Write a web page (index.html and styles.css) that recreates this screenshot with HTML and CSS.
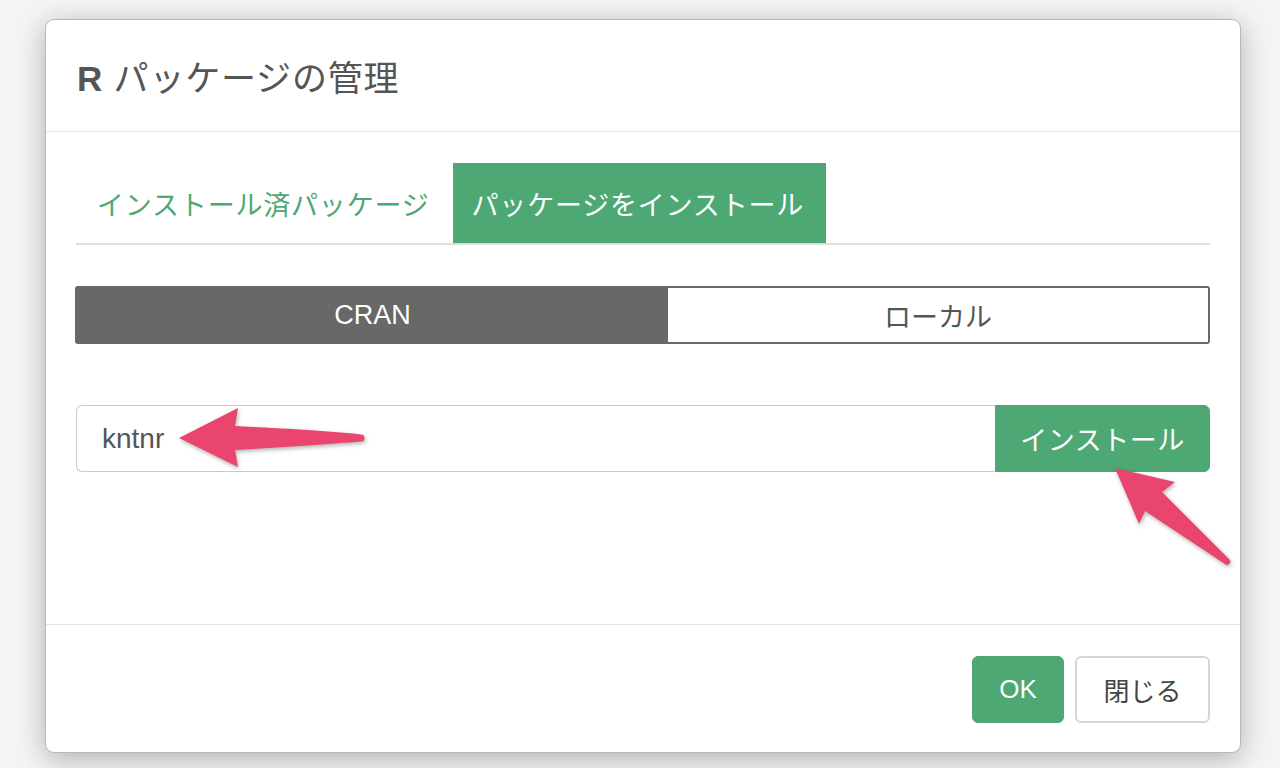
FILE: index.html
```html
<!DOCTYPE html>
<html lang="ja">
<head>
<meta charset="utf-8">
<title>R パッケージの管理</title>
<link rel="stylesheet" href="styles.css">
</head>
<body>
<div class="dialog">
  <div class="dialog-header">
    <h1 class="dialog-title"><span class="title-r">R</span> パッケージの管理</h1>
  </div>
  <div class="dialog-body">
    <ul class="tabs">
      <li class="tab">インストール済パッケージ</li>
      <li class="tab tab-active">パッケージをインストール</li>
    </ul>
    <div class="segmented">
      <div class="seg seg-active">CRAN</div>
      <div class="seg">ローカル</div>
    </div>
    <div class="install-row">
      <div class="pkg-input">kntnr</div>
      <button class="btn btn-green btn-install">インストール</button>
    </div>
  </div>
  <div class="dialog-footer">
    <button class="btn btn-green btn-ok">OK</button>
    <button class="btn btn-default btn-close">閉じる</button>
  </div>
</div>
<svg class="arrows" width="1280" height="768" viewBox="0 0 1280 768">
  <path d="M179 438 L238 408 L235 426 C290 429 330 431 361 434.5 A3.5 3.5 0 0 1 361 441.5 C330 444 290 447 235 450 L238 467 Z"/>
  <path d="M1115 468 L1175 482 L1162 492 L1229 559 A3 3 0 0 1 1225 564 L1145 511 L1139 524 Z"/>
</svg>
</body>
</html>
```

FILE: styles.css
```css
* { box-sizing: border-box; }

html, body {
  margin: 0;
  padding: 0;
  width: 1280px;
  height: 768px;
  overflow: hidden;
}

body {
  background: #f4f4f4;
  font-family: "Liberation Sans", "Noto Sans CJK JP", sans-serif;
  color: #555;
  position: relative;
  padding: 19px 0 0 45px;
}

.dialog {
  width: 1196px;
  height: 734px;
  background: #fff;
  border: 1px solid #b8b8b8;
  border-radius: 9px;
  box-shadow: 0 6px 28px rgba(0, 0, 0, 0.28);
  display: flex;
  flex-direction: column;
  overflow: hidden;
}

.dialog-header {
  height: 112px;
  flex: none;
  border-bottom: 1px solid #e5e5e5;
  padding: 0 31px;
  display: flex;
  align-items: center;
}

.dialog-title {
  margin: 0;
  font-size: 35px;
  font-weight: 400;
  color: #555;
  letter-spacing: 0.8px;
}

.title-r {
  font-weight: 700;
}

.dialog-body {
  flex: 1;
  padding: 31px 30px 0 30px;
}

.tabs {
  list-style: none;
  margin: 0;
  padding: 0;
  display: flex;
  gap: 2px;
  border-bottom: 2px solid #dedede;
}

.tab {
  height: 80px;
  padding: 0 21px;
  display: flex;
  align-items: center;
  font-size: 27px;
  color: #4da873;
  letter-spacing: 0.8px;
}

.tab-active {
  background: #4da873;
  color: #fff;
  padding: 0 22px 0 19px;
}

.segmented {
  margin-top: 41px;
  height: 58px;
  display: grid;
  grid-template-columns: 591px 1fr;
  border: 2px solid #686868;
  border-radius: 3px;
  margin-left: -1px;
}

.seg {
  display: flex;
  align-items: center;
  justify-content: center;
  font-size: 27px;
  color: #555;
  background: #fff;
}

.seg-active {
  background: #686868;
  color: #fff;
}

.install-row {
  margin-top: 61px;
  height: 67px;
  display: flex;
}

.pkg-input {
  flex: 1;
  border: 1px solid #cacaca;
  border-right: none;
  border-radius: 6px 0 0 6px;
  padding: 0 25px;
  display: flex;
  align-items: center;
  font-size: 28px;
  color: #555;
}

.btn {
  font-family: inherit;
  font-size: 27px;
  border-radius: 6px;
  cursor: pointer;
  padding: 0;
  height: 67px;
}

.btn-green {
  background: #4da873;
  border: 1px solid #4da873;
  color: #fff;
}

.btn-install {
  width: 215px;
  border-radius: 0 6px 6px 0;
  letter-spacing: 0.5px;
}

.dialog-footer {
  flex: none;
  border-top: 1px solid #e5e5e5;
  padding: 31px 30px 29px;
  display: flex;
  justify-content: flex-end;
  gap: 11px;
}

.btn-ok {
  width: 92px;
  font-size: 26px;
}

.btn-default {
  background: #fff;
  border: 2px solid #d6d6d6;
  color: #444;
}

.btn-close {
  width: 135px;
  font-size: 26px;
}

.arrows {
  position: absolute;
  left: 0;
  top: 0;
  pointer-events: none;
  fill: #ea456e;
  filter: drop-shadow(1px 2px 2px rgba(0, 0, 0, 0.3));
}
```
